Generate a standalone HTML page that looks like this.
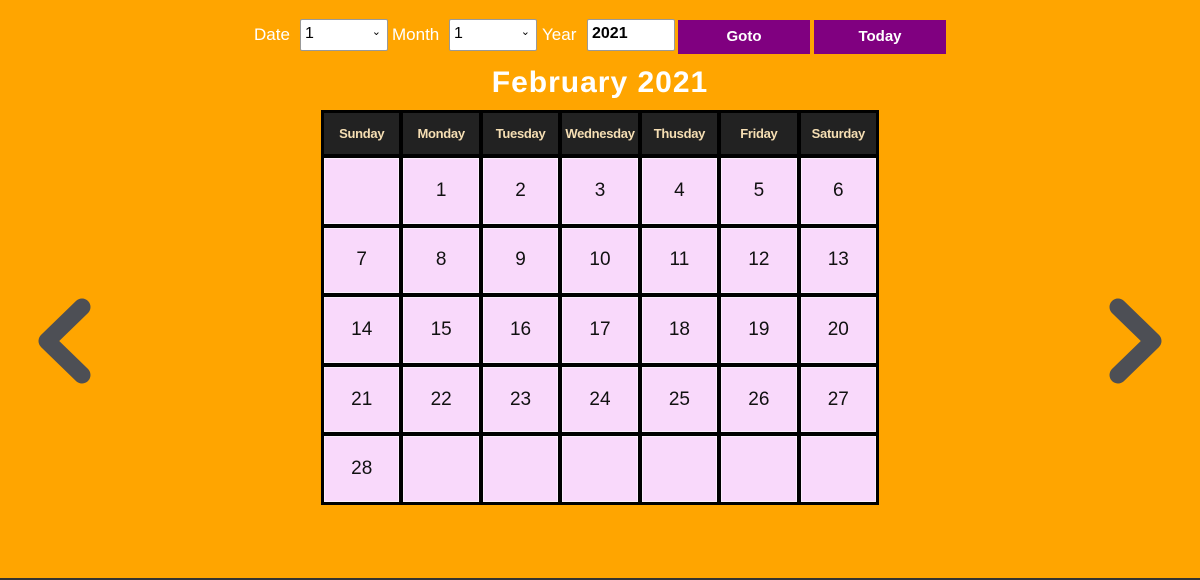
<!DOCTYPE html>
<html><head><meta charset="utf-8"><style>
html,body{margin:0;padding:0}
body{width:1200px;height:580px;background:#ffa500;position:relative;overflow:hidden;font-family:"Liberation Sans",sans-serif}
.bot{position:absolute;left:0;bottom:0;width:1200px;height:2px;background:#333}
.lbl{position:absolute;top:25px;color:#fff;font-size:17px}
.sel{position:absolute;top:19px;height:32px;background:#fff;border:1px solid #999;box-sizing:border-box;font-size:16px;color:#000;padding:5px 4px;border-radius:2px}
.sel span{position:absolute;right:6px;top:5px;font-size:11px}
.btn{position:absolute;top:20px;height:34px;background:#800080;color:#fff;font-size:15px;text-align:center;line-height:33px;font-weight:bold}
h1{position:absolute;top:66px;left:0;width:1200px;margin:0;text-align:center;color:#fff;font-size:30px;font-weight:bold;letter-spacing:1px}
.grid{position:absolute;left:321px;top:110px;width:558px;height:395px;box-sizing:border-box;background:#000;padding:3px;display:grid;grid-template-columns:repeat(7,1fr);grid-template-rows:41px repeat(5,1fr);gap:4px}
.h{background:#222;color:#f5deb3;font-size:13px;font-weight:bold;display:flex;align-items:center;justify-content:center;letter-spacing:-0.3px}
.c{background:#f9d9fb;border:1px solid #fbeefc;box-sizing:border-box;display:flex;align-items:center;justify-content:center;font-size:19px;color:#111;font-family:"Liberation Sans Narrow","Liberation Sans",sans-serif}
svg{position:absolute}
</style></head><body>
<div class="lbl" style="left:254px">Date</div>
<div class="sel" style="left:300px;width:88px">1<span>⌄</span></div>
<div class="lbl" style="left:392px">Month</div>
<div class="sel" style="left:449px;width:88px">1<span>⌄</span></div>
<div class="lbl" style="left:542px">Year</div>
<div class="sel" style="left:587px;width:88px;font-weight:bold">2021</div>
<div class="btn" style="left:678px;width:132px">Goto</div>
<div class="btn" style="left:814px;width:132px">Today</div>
<h1>February 2021</h1>
<div class="grid">
<div class="h">Sunday</div><div class="h">Monday</div><div class="h">Tuesday</div><div class="h">Wednesday</div><div class="h">Thusday</div><div class="h">Friday</div><div class="h">Saturday</div>
<div class="c"></div><div class="c">1</div><div class="c">2</div><div class="c">3</div><div class="c">4</div><div class="c">5</div><div class="c">6</div>
<div class="c">7</div><div class="c">8</div><div class="c">9</div><div class="c">10</div><div class="c">11</div><div class="c">12</div><div class="c">13</div>
<div class="c">14</div><div class="c">15</div><div class="c">16</div><div class="c">17</div><div class="c">18</div><div class="c">19</div><div class="c">20</div>
<div class="c">21</div><div class="c">22</div><div class="c">23</div><div class="c">24</div><div class="c">25</div><div class="c">26</div><div class="c">27</div>
<div class="c">28</div><div class="c"></div><div class="c"></div><div class="c"></div><div class="c"></div><div class="c"></div><div class="c"></div>
</div>
<svg style="left:0;top:0" width="1200" height="580"><path d="M82 307 L47 341 L82 375" fill="none" stroke="#4d4f55" stroke-width="17" stroke-linecap="round" stroke-linejoin="round"/><path d="M1118 307 L1153 341 L1118 375" fill="none" stroke="#4d4f55" stroke-width="17" stroke-linecap="round" stroke-linejoin="round"/></svg>
<div class="bot"></div>
</body></html>
